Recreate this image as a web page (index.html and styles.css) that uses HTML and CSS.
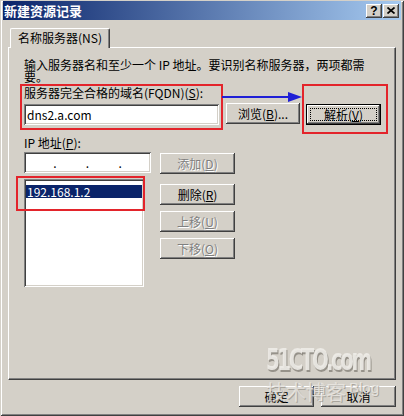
FILE: index.html
```html
<!DOCTYPE html>
<html lang="zh-CN">
<head>
<meta charset="utf-8">
<title>新建资源记录</title>
<link rel="stylesheet" href="styles.css">
</head>
<body>
<div class="window">
  <div class="titlebar">
    <span class="title">新建资源记录</span>
    <div class="caption-btns">
      <span class="cap-btn">?</span>
      <span class="cap-btn"><svg class="x-icon" viewBox="0 0 8 7" width="8" height="7"><path d="M0.5 0.5 L7.5 6.5 M7.5 0.5 L0.5 6.5" stroke="#000" stroke-width="1.7" fill="none"/></svg></span>
    </div>
  </div>
  <div class="tabstrip"><div class="tab">名称服务器(NS)</div></div>
  <div class="panel">
    <p class="desc">输入服务器名和至少一个 IP 地址。要识别名称服务器，两项都需要。</p>
    <div class="fqdn-row">
      <div class="mark fqdn-box">
        <div class="label">服务器完全合格的域名(FQDN)(<u>S</u>):</div>
        <div class="field fqdn-field">dns2.a.com</div>
      </div>
      <button class="btn browse">浏览(<u>B</u>)...</button>
      <div class="mark resolve-box">
        <button class="btn default">解析(<u>V</u>)</button>
      </div>
    </div>
    <div class="label ip-label">IP 地址(<u>P</u>):</div>
    <div class="ip-row">
      <div class="field ip-field"><span>.</span><span>.</span><span>.</span></div>
      <button class="btn disabled add">添加(<u>D</u>)</button>
    </div>
    <div class="list-row">
      <div class="field listbox"><div class="item">192.168.1.2</div></div>
      <div class="btn-col">
        <button class="btn">删除(<u>R</u>)</button>
        <button class="btn disabled">上移(<u>U</u>)</button>
        <button class="btn disabled">下移(<u>O</u>)</button>
      </div>
    </div>
    <svg class="arrow" viewBox="0 0 82 12" width="82" height="12"><path d="M0 6 H70" stroke="#1f1fd6" stroke-width="2"/><polygon points="66,1 80,6 66,11" fill="#1f1fd6"/></svg>
    <div class="mark list-mark"></div>
  </div>
  <div class="footer">
    <button class="btn">确定</button>
    <button class="btn">取消</button>
  </div>
  <div class="watermark">
    <div class="wm-big">51CTO.com</div>
    <div class="wm-small"><span class="wm-cn">技术博客</span><span class="wm-blog">Blog</span></div>
  </div>
</div>
</body>
</html>
```
FILE: styles.css
```css
* { box-sizing: border-box; }
html, body { margin: 0; padding: 0; }
body {
  width: 404px;
  height: 416px;
  overflow: hidden;
  background: #d4d0c8;
  font-family: "Noto Sans CJK SC", "Liberation Sans", sans-serif;
  font-size: 12px;
  color: #000;
}
u { text-decoration: underline; text-underline-offset: 1px; }

.window {
  position: relative;
  width: 404px;
  height: 416px;
  padding: 1px 3px 3px 3px;
  background: #d4d0c8;
  box-shadow: inset 1px 1px #d4d0c8, inset -1px -1px #404040, inset 2px 2px #fff, inset -2px -2px #808080;
}

.titlebar {
  height: 19px;
  display: flex;
  align-items: center;
  justify-content: space-between;
  padding: 0 2px 0 1px;
  background: linear-gradient(to right, #0a246a, #a6caf0);
}
.title {
  color: #fff;
  font-weight: 700;
  font-size: 13px;
  line-height: 19px;
}
.caption-btns { display: flex; gap: 1px; }
.cap-btn {
  width: 16px;
  height: 14px;
  display: flex;
  align-items: center;
  justify-content: center;
  background: #d4d0c8;
  box-shadow: inset -1px -1px #404040, inset 1px 1px #fff, inset -2px -2px #808080;
  font: 700 12px/14px "Liberation Sans", sans-serif;
}
.x-icon { display: block; }

.tabstrip { display: flex; margin-top: 8px; padding-left: 7px; }
.tab {
  position: relative;
  z-index: 1;
  width: 100px;
  height: 20px;
  margin-bottom: -1px;
  padding: 2px 0 0 7px;
  background: #d4d0c8;
  border-left: 1px solid #fff;
  border-top: 1px solid #fff;
  border-right: 1px solid #404040;
  border-radius: 2px 2px 0 0;
  box-shadow: inset -1px 0 #808080;
  line-height: 14px;
  white-space: nowrap;
}

.panel {
  position: relative;
  width: 388px;
  height: 333px;
  margin-left: 5px;
  padding: 11px 0 0 15px;
  border: 1px solid;
  border-color: #fff #404040 #404040 #fff;
  box-shadow: inset -1px -1px #808080;
}
.desc {
  margin: 0;
  width: 356px;
  line-height: 12px;
}
.label { line-height: 14px; white-space: nowrap; }

.mark { border: 2px solid #e3242b; }

.fqdn-row {
  display: flex;
  align-items: flex-start;
  margin: 1px 0 0 -4px;
}
.fqdn-box {
  width: 203px;
  height: 46px;
  padding: 0 2px;
}
.field {
  background: #fff;
  box-shadow: inset 1px 1px #808080, inset -1px -1px #fff, inset 2px 2px #404040, inset -2px -2px #d4d0c8;
}
.fqdn-field {
  width: 195px;
  height: 21px;
  margin-top: 4px;
  padding: 0 3px;
  line-height: 21px;
}

.btn {
  display: flex;
  align-items: center;
  justify-content: center;
  width: 75px;
  height: 21px;
  padding: 0;
  border: 0;
  background: #d4d0c8;
  font: inherit;
  color: #000;
  box-shadow: inset -1px -1px #404040, inset 1px 1px #fff, inset -2px -2px #808080;
  white-space: nowrap;
}
.btn.disabled { color: #808080; text-shadow: 1px 1px #fff; }
.btn.browse { width: 74px; margin: 19px 0 0 3px; }
.resolve-box {
  width: 86px;
  height: 50px;
  margin-left: 2px;
  padding: 18px 0 0 2px;
}
.btn.default {
  border: 1px solid #000;
  outline: 1px dotted #000;
  outline-offset: -5px;
}

.ip-label { margin-top: 2px; }
.ip-row { display: flex; align-items: flex-start; margin-top: 2px; }
.ip-field {
  width: 127px;
  height: 21px;
  display: flex;
  justify-content: space-evenly;
  align-items: center;
  line-height: 12px;
}
.btn.add { margin: 1px 0 0 9px; }

.list-row { display: flex; align-items: flex-start; margin-top: 5px; }
.listbox {
  width: 120px;
  height: 108px;
  padding: 6px 2px 0 2px;
}
.item {
  height: 13px;
  line-height: 13px;
  padding-left: 1px;
  background: #0a246a;
  color: #fff;
}
.btn-col {
  display: flex;
  flex-direction: column;
  gap: 6px;
  margin: 5px 0 0 16px;
}

.arrow { position: absolute; left: 213px; top: 43px; }
.list-mark {
  position: absolute;
  left: 7px;
  top: 128px;
  width: 129px;
  height: 35px;
}

.footer {
  display: flex;
  justify-content: flex-end;
  gap: 7px;
  margin: 6px 5px 0 0;
}

.watermark {
  position: absolute;
  left: 266px;
  top: 346px;
  width: 134px;
  z-index: 2;
  pointer-events: none;
}
.wm-big {
  height: 28px;
  font: 700 22px/22px "DejaVu Sans Condensed", "DejaVu Sans", sans-serif;
  letter-spacing: -2.4px;
  white-space: nowrap;
  transform: scaleY(1.35);
  transform-origin: left top;
  color: rgba(238, 236, 232, 0.9);
  text-shadow: 1px 1px rgba(130, 126, 118, 0.75);
}
.wm-small {
  display: flex;
  align-items: flex-start;
  margin-top: 7px;
}
.wm-cn {
  font-size: 20px;
  line-height: 22px;
  color: rgba(236, 234, 230, 0.75);
  text-shadow: 1px 1px rgba(140, 136, 128, 0.6);
}
.wm-blog {
  margin-left: 3px;
  font: 400 15px/14px "Liberation Sans", sans-serif;
  color: rgba(236, 234, 230, 0.8);
  text-shadow: 1px 1px rgba(140, 136, 128, 0.6);
}
```
